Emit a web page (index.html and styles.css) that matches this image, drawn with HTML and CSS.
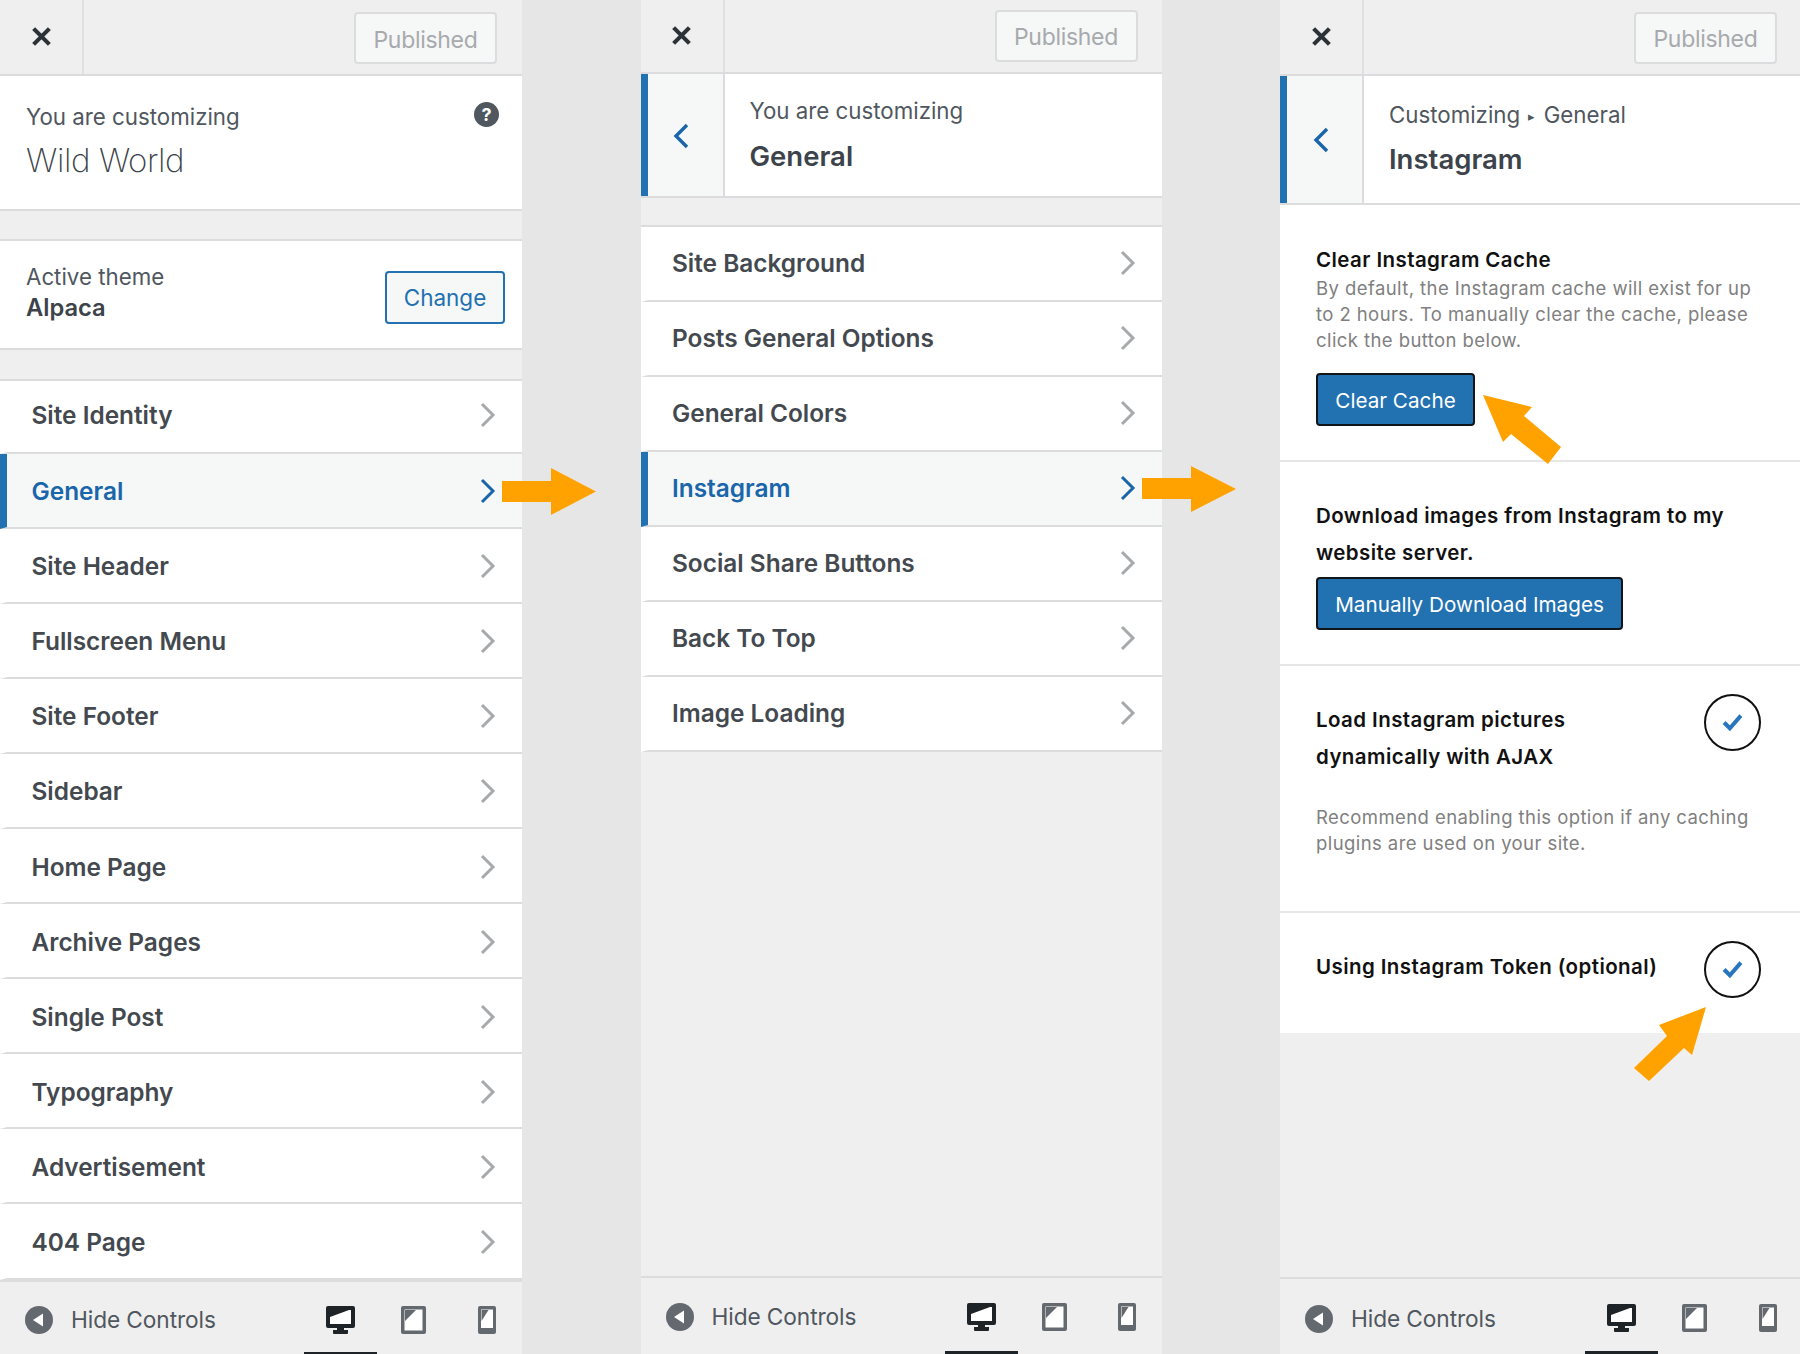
FILE: index.html
```html
<!DOCTYPE html>
<html lang="en">
<head>
<meta charset="utf-8">
<title>Customizer</title>
<link rel="stylesheet" href="styles.css">
</head>
<body>
<svg width="0" height="0" class="defs">
  <defs>
    <symbol id="x" viewBox="0 0 20 20"><path d="M2.5 2.5 17.5 17.5M17.5 2.5 2.5 17.5" fill="none" stroke="currentColor" stroke-width="4"/></symbol>
    <symbol id="chev" viewBox="0 0 16 26"><path d="M2 2 13 13 2 24" fill="none" stroke="currentColor" stroke-width="3"/></symbol>
    <symbol id="back" viewBox="0 0 16 26"><path d="M14 2 3 13 14 24" fill="none" stroke="currentColor" stroke-width="3.4"/></symbol>
    <symbol id="hide" viewBox="0 0 28 28"><circle cx="14" cy="14" r="14" fill="#646970"/><path d="M18 7.5v13L8 14z" fill="#fff"/></symbol>
    <symbol id="desk" viewBox="0 0 29 28"><path d="M2 0h25a2 2 0 0 1 2 2v18a2 2 0 0 1-2 2H18v2h4v3a1 1 0 0 1-1 1H8a1 1 0 0 1-1-1v-3h4v-2H2a2 2 0 0 1-2-2V2a2 2 0 0 1 2-2z" fill="currentColor"/><path d="M4 4h21v14H4z" fill="#fff"/><path d="M4 4h19L4 11z" fill="currentColor"/></symbol>
    <symbol id="tab" viewBox="0 0 25 28"><path d="M2 0h21a2 2 0 0 1 2 2v24a2 2 0 0 1-2 2H2a2 2 0 0 1-2-2V2a2 2 0 0 1 2-2z" fill="currentColor"/><path d="M3.500 3.500h18v21h-18z" fill="#fff"/><path d="M4 4h11L4 15z" fill="currentColor"/></symbol>
    <symbol id="phone" viewBox="0 0 18 28"><path d="M2 0h14a2 2 0 0 1 2 2v24a2 2 0 0 1-2 2H2a2 2 0 0 1-2-2V2a2 2 0 0 1 2-2z" fill="currentColor"/><path d="M3 3.500h12V22H3z" fill="#fff"/><path d="M3.500 4h7L3.500 15z" fill="currentColor"/></symbol>
    <symbol id="tick" viewBox="0 0 20 18"><path d="M2 9 7.500 14.500 18 2.500" fill="none" stroke="currentColor" stroke-width="3.800"/></symbol>
  </defs>
</svg>

<main class="stage">

  <section class="panel panel-first">
    <header class="topbar">
      <a class="close"><svg class="icon-x"><use href="#x"/></svg></a>
      <button class="published">Published</button>
    </header>
    <div class="intro">
      <div class="intro-row">
        <span class="intro-label">You are customizing</span>
        <span class="help">?</span>
      </div>
      <h1 class="site-name">Wild World</h1>
    </div>
    <div class="theme">
      <div class="theme-text">
        <span class="theme-label">Active theme</span>
        <strong class="theme-name">Alpaca</strong>
      </div>
      <button class="change">Change</button>
    </div>
    <ul class="menu">
      <li class="item"><span>Site Identity</span><svg class="chev"><use href="#chev"/></svg></li>
      <li class="item active"><span>General</span><svg class="chev"><use href="#chev"/></svg></li>
      <li class="item"><span>Site Header</span><svg class="chev"><use href="#chev"/></svg></li>
      <li class="item"><span>Fullscreen Menu</span><svg class="chev"><use href="#chev"/></svg></li>
      <li class="item"><span>Site Footer</span><svg class="chev"><use href="#chev"/></svg></li>
      <li class="item"><span>Sidebar</span><svg class="chev"><use href="#chev"/></svg></li>
      <li class="item"><span>Home Page</span><svg class="chev"><use href="#chev"/></svg></li>
      <li class="item"><span>Archive Pages</span><svg class="chev"><use href="#chev"/></svg></li>
      <li class="item"><span>Single Post</span><svg class="chev"><use href="#chev"/></svg></li>
      <li class="item"><span>Typography</span><svg class="chev"><use href="#chev"/></svg></li>
      <li class="item"><span>Advertisement</span><svg class="chev"><use href="#chev"/></svg></li>
      <li class="item"><span>404 Page</span><svg class="chev"><use href="#chev"/></svg></li>
    </ul>
    <footer class="footbar">
      <svg class="hide-icon"><use href="#hide"/></svg><span class="hide-text">Hide Controls</span>
      <div class="devices">
        <a class="device on"><svg class="d-desk"><use href="#desk"/></svg></a>
        <a class="device"><svg class="d-tab"><use href="#tab"/></svg></a>
        <a class="device"><svg class="d-phone"><use href="#phone"/></svg></a>
      </div>
    </footer>
  </section>

  <section class="panel panel-second">
    <header class="topbar">
      <a class="close"><svg class="icon-x"><use href="#x"/></svg></a>
      <button class="published">Published</button>
    </header>
    <div class="sec-head">
      <a class="back"><svg class="back-icon"><use href="#back"/></svg></a>
      <div class="sec-text">
        <span class="sec-crumb">You are customizing</span>
        <h2 class="sec-title">General</h2>
      </div>
    </div>
    <ul class="menu menu-second">
      <li class="item"><span>Site Background</span><svg class="chev"><use href="#chev"/></svg></li>
      <li class="item"><span>Posts General Options</span><svg class="chev"><use href="#chev"/></svg></li>
      <li class="item"><span>General Colors</span><svg class="chev"><use href="#chev"/></svg></li>
      <li class="item active"><span>Instagram</span><svg class="chev"><use href="#chev"/></svg></li>
      <li class="item"><span>Social Share Buttons</span><svg class="chev"><use href="#chev"/></svg></li>
      <li class="item"><span>Back To Top</span><svg class="chev"><use href="#chev"/></svg></li>
      <li class="item"><span>Image Loading</span><svg class="chev"><use href="#chev"/></svg></li>
    </ul>
    <footer class="footbar">
      <svg class="hide-icon"><use href="#hide"/></svg><span class="hide-text">Hide Controls</span>
      <div class="devices">
        <a class="device on"><svg class="d-desk"><use href="#desk"/></svg></a>
        <a class="device"><svg class="d-tab"><use href="#tab"/></svg></a>
        <a class="device"><svg class="d-phone"><use href="#phone"/></svg></a>
      </div>
    </footer>
  </section>

  <section class="panel panel-third">
    <header class="topbar">
      <a class="close"><svg class="icon-x"><use href="#x"/></svg></a>
      <button class="published">Published</button>
    </header>
    <div class="sec-head">
      <a class="back"><svg class="back-icon"><use href="#back"/></svg></a>
      <div class="sec-text">
        <span class="sec-crumb">Customizing <i class="sep">▸</i> General</span>
        <h2 class="sec-title">Instagram</h2>
      </div>
    </div>
    <div class="controls">
      <div class="control c-cache">
        <h3 class="c-title">Clear Instagram Cache</h3>
        <p class="c-desc">By default, the Instagram cache will exist for up to 2 hours. To manually clear the cache, please click the button below.</p>
        <button class="primary">Clear Cache</button>
      </div>
      <div class="control c-download">
        <h3 class="c-title c-wide">Download images from Instagram to my website server.</h3>
        <button class="primary wide">Manually Download Images</button>
      </div>
      <div class="control c-ajax">
        <div class="c-toggle-row">
          <h3 class="c-title c-wide c-narrow">Load Instagram pictures dynamically with AJAX</h3>
          <span class="toggle"><svg class="tick"><use href="#tick"/></svg></span>
        </div>
        <p class="c-desc c-desc-wide">Recommend enabling this option if any caching plugins are used on your site.</p>
      </div>
      <div class="control c-token">
        <div class="c-toggle-row">
          <h3 class="c-title c-wide">Using Instagram Token (optional)</h3>
          <span class="toggle"><svg class="tick"><use href="#tick"/></svg></span>
        </div>
      </div>
    </div>
    <footer class="footbar">
      <svg class="hide-icon"><use href="#hide"/></svg><span class="hide-text">Hide Controls</span>
      <div class="devices">
        <a class="device on"><svg class="d-desk"><use href="#desk"/></svg></a>
        <a class="device"><svg class="d-tab"><use href="#tab"/></svg></a>
        <a class="device"><svg class="d-phone"><use href="#phone"/></svg></a>
      </div>
    </footer>
  </section>

  <svg class="arrows" viewBox="0 0 1800 1354">
    <polygon points="502,481 551,481 551,468 596,491.500 551,515 551,502 502,502"/>
    <polygon points="1142,478 1191,478 1191,466 1236,489 1191,512 1191,499 1142,499"/>
    <polygon points="1483,395 1532,407 1524,416 1561,447 1548,464 1511,434 1503,442"/>
    <polygon points="1706,1007 1659,1025 1667,1036 1634,1068 1649,1081 1684,1048 1692,1055"/>
  </svg>
</main>
</body>
</html>
```

FILE: styles.css
```css
* { box-sizing: border-box; }
html, body { margin: 0; padding: 0; }
body { width: 1800px; height: 1354px; overflow: hidden; background: #e6e6e6; font-family: Inter, "Liberation Sans", sans-serif; color: #3c434a; }
.defs { position: absolute; }
h1, h2, h3, p, ul { margin: 0; padding: 0; }
ul { list-style: none; }
button { font-family: inherit; cursor: pointer; }

.stage { position: relative; width: 1800px; height: 1354px; display: grid; grid-template-columns: 522px 521px 520px; justify-content: space-between; }
.panel { display: flex; flex-direction: column; height: 1354px; background: #efefef; min-width: 0; }

.topbar { display: flex; align-items: center; justify-content: space-between; height: 76px; flex: none; border-bottom: 2px solid #dcdcde; padding-right: 25px; }
.panel-second .topbar { padding-right: 24px; height: 74px; }
.panel-third .topbar { padding-right: 23px; }
.close { width: 84px; height: 100%; display: flex; align-items: center; justify-content: center; border-right: 2px solid #e0e0e2; color: #2c3338; padding-bottom: 2px; }
.panel-first .close, .panel-third .close { padding-left: 1px; }
.icon-x { width: 21px; height: 21px; }
.published { width: 143px; height: 52px; border: 2px solid #dcdcde; border-radius: 4px; background: #f6f7f7; color: #a7aaad; font-size: 23px; letter-spacing: -.3px; padding: 2px 0 0; }
.panel-first .published, .panel-third .published { margin-top: 2px; }
.panel-first .published { padding-top: 3px; }

.intro { height: 135px; flex: none; background: #fff; border-bottom: 2px solid #dcdcde; padding: 27px 26px 0; }
.intro-row { display: flex; justify-content: space-between; align-items: flex-start; margin-right: -3px; }
.intro-label { font-size: 22.300px; line-height: 28px; color: #50575e; }
.help { width: 25px; height: 25px; margin-top: -1px; border-radius: 50%; background: #50575e; color: #fff; font-weight: 700; font-size: 18px; line-height: 25px; text-align: center; }
.site-name { font-weight: 200; font-size: 33px; line-height: 44px; margin-top: 7px; color: #3c434a; letter-spacing: -.4px; }

.theme { height: 111px; flex: none; margin-top: 28px; background: #fff; border-top: 2px solid #dcdcde; border-bottom: 2px solid #dcdcde; padding: 0 17px 0 26px; display: flex; align-items: center; justify-content: space-between; }
.theme-text { display: flex; flex-direction: column; margin-bottom: 5px; }
.theme-label { font-size: 22.300px; line-height: 31px; color: #50575e; }
.theme-name { font-size: 23.700px; line-height: 31px; font-weight: 600; }
.change { width: 120px; height: 53px; margin-top: 5px; border: 2px solid #2271b1; border-radius: 4px; background: #f6f7f7; color: #2271b1; font-size: 22.500px; padding: 0; }

.menu { margin-top: 29px; background: #fff; flex: none; border-top: 2px solid #dcdcde; }
.menu-second { margin-top: 27px; }
.item { height: 75px; display: flex; align-items: center; justify-content: space-between; border-left: 7px solid #fff; border-bottom: 2px solid #dcdcde; padding: 0 26px 0 24.500px; font-size: 24.400px; font-weight: 600; color: #43494f; }
.panel-first .item { height: 75.100px; padding-top: 2px; }
.panel-first .item:first-child { height: 72.500px; padding-top: 0; padding-bottom: 2px; }
.menu-second .item { padding-bottom: 2px; }
.item .chev { width: 16px; height: 26px; color: #a7aaad; }
.item.active { border-left-color: #2271b1; background: #f6f7f7; color: #1a66ab; }
.item.active .chev { color: #1a66ab; }

.footbar { margin-top: auto; height: 75px; flex: none; display: flex; align-items: flex-start; padding: 25px 0 0 25px; border-top: 2px solid #dcdcde; }
.panel-first .footbar { padding-top: 24px; }
.hide-icon { width: 28px; height: 28px; flex: none; }
.hide-text { font-size: 22.700px; line-height: 28px; margin-left: 18px; color: #50575e; letter-spacing: -.1px; }
.devices { margin-left: auto; display: flex; align-self: stretch; margin-top: -25px; }
.panel-first .devices { margin-right: -1px; margin-top: -24px; }
.panel-second .devices { margin-right: -2px; }
.panel-third .devices { margin-right: -4px; }
.device { width: 73px; display: flex; justify-content: center; padding-top: 25px; color: #646970; border-bottom: 3px solid transparent; }
.panel-first .device { padding-top: 24px; }
.device.on { color: #1d2327; border-bottom-color: #1d2327; }
.d-desk { width: 29px; height: 28px; }
.d-tab { width: 25px; height: 28px; }
.d-phone { width: 18px; height: 28px; }

.panel-second .footbar { height: 78px; }
.panel-third .footbar { height: 77px; padding-top: 26px; }
.panel-third .devices { margin-top: -26px; }

.sec-head { display: flex; background: #fff; border-bottom: 2px solid #dcdcde; flex: none; height: 124px; }
.panel-third .sec-head { height: 129px; }
.back { width: 84px; flex: none; display: flex; align-items: center; justify-content: center; border-left: 7px solid #2271b1; border-right: 2px solid #dcdcde; background: #f6f7f7; color: #1a66ab; }
.back-icon { width: 16px; height: 26px; margin-right: 8px; margin-top: 2px; }
.panel-third .back-icon { margin-top: 0; }
.sec-text { padding: 23px 0 0 25px; display: flex; flex-direction: column; }
.panel-third .sec-text { padding-top: 25px; }
.sec-crumb { font-size: 22.300px; line-height: 28px; color: #50575e; }
.sep { font-style: normal; font-size: 13px; vertical-align: 2px; margin: 0 2px; }
.sec-title { font-size: 27.500px; line-height: 36px; font-weight: 600; margin-top: 13px; }
.panel-third .sec-title { margin-top: 11px; }

.controls { flex: none; background: #fff; }
.control { padding: 0 36px; border-bottom: 2px solid #e6e6e6; }
.c-cache { height: 257px; padding-top: 43px; }
.c-download { height: 204px; padding-top: 36px; }
.c-ajax { height: 247px; padding-top: 36px; }
.c-token { height: 120px; padding-top: 36px; border-bottom: 0; }
.c-title { font-size: 20.500px; font-weight: 600; line-height: 24px; color: #111; letter-spacing: .42px; }
.c-wide { line-height: 36.500px; }
.c-narrow { width: 330px; }
.c-desc { font-size: 18.500px; line-height: 26px; color: #808080; margin-top: 3px; letter-spacing: .42px; }
.c-desc-wide { margin-top: 29px; }
.primary { display: block; height: 53px; width: 159px; margin-top: 20px; border: 2px solid #10151a; border-radius: 4px; background: #2271b1; color: #fff; font-size: 20.700px; padding: 2px 0 0; }
.primary.wide { width: 307px; margin-top: 6px; }
.c-toggle-row { display: flex; justify-content: space-between; align-items: flex-start; }
.toggle { width: 57px; height: 57px; margin-right: 3px; margin-top: -8px; border: 2px solid #111; border-radius: 50%; display: flex; align-items: center; justify-content: center; color: #2876c0; flex: none; }
.tick { width: 21px; height: 19px; }

.arrows { position: absolute; left: 0; top: 0; width: 1800px; height: 1354px; pointer-events: none; fill: #ffa200; }
```
